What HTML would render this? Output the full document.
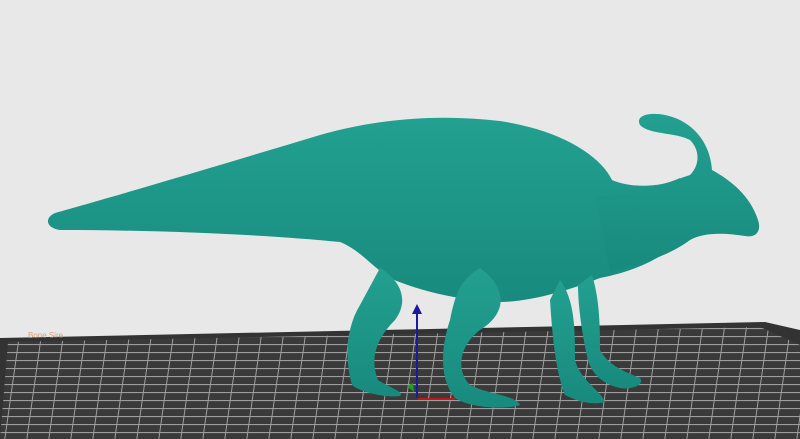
<!DOCTYPE html>
<html><head><style>
html,body{margin:0;padding:0;background:#e8e8e8;width:800px;height:439px;overflow:hidden}
</style></head><body>
<svg width="800" height="439" viewBox="0 0 800 439" xmlns="http://www.w3.org/2000/svg">
<defs>
<pattern id="g" width="22" height="8" patternUnits="userSpaceOnUse" patternTransform="skewX(-8)">
<rect width="22" height="8" fill="#3a3a3a"/>
<path d="M0 0.5H22M0.5 0V8" stroke="#a0a0a0" stroke-width="1"/>
</pattern>
<linearGradient id="d" x1="0" y1="0" x2="0" y2="1">
<stop offset="0" stop-color="#22a090"/><stop offset="1" stop-color="#188a7e"/>
</linearGradient>
</defs>
<rect width="800" height="439" fill="#e8e8e8"/>
<polygon points="0,338 765,322 800,330 800,439 0,439" fill="#333"/>
<polygon points="8,342 760,327 800,345 800,439 0,439" fill="url(#g)"/>
<text x="28" y="338" font-family="Liberation Sans,sans-serif" font-size="8" fill="#e07a4a" opacity=".7">Bone Sire</text>
<g fill="url(#d)">
<path d="M55 213 C120 195 220 165 320 135 C380 118 440 114 500 121 C560 130 600 155 612 180 C630 188 660 188 680 178 L690 230 C670 255 640 270 600 278 C570 290 530 302 500 302 C470 302 420 292 390 278 C370 265 360 250 340 242 C260 234 150 230 60 230 C46 228 44 218 55 213 Z"/>
<path d="M595 195 C630 198 660 185 690 175 C700 165 700 150 690 140 C675 132 650 135 640 125 C635 115 650 112 665 115 C690 120 710 140 712 170 C730 180 750 195 758 220 C762 232 755 238 745 236 C725 233 705 232 690 240 C670 255 640 265 610 272 Z"/>
<path d="M380 268 C400 280 410 300 395 320 C375 340 370 360 378 380 C390 388 405 392 400 396 C385 398 360 392 352 385 C345 360 345 330 360 305 Z"/>
<path d="M480 268 C510 290 505 315 480 330 C460 345 455 370 470 385 C490 395 515 395 520 405 C505 410 470 408 455 398 C440 380 440 350 450 320 C455 295 460 280 480 268 Z"/>
<path d="M560 280 C575 300 575 330 575 360 C580 380 600 390 605 402 C590 406 575 400 565 395 C555 370 552 330 550 300 Z"/>
<path d="M592 275 C600 300 600 330 600 350 C608 365 625 372 640 378 C645 385 632 390 620 388 C605 385 592 375 588 360 C582 335 578 305 578 285 Z"/>
</g>
<line x1="417" y1="398" x2="417" y2="312" stroke="#1a1aa0" stroke-width="2"/>
<polygon points="412,314 422,314 417,304" fill="#1a1aa0"/>
<line x1="418" y1="399" x2="455" y2="399" stroke="#c01818" stroke-width="2"/>
<polygon points="407,386 413,383 414,392" fill="#20a020"/>
</svg>
</body></html>
